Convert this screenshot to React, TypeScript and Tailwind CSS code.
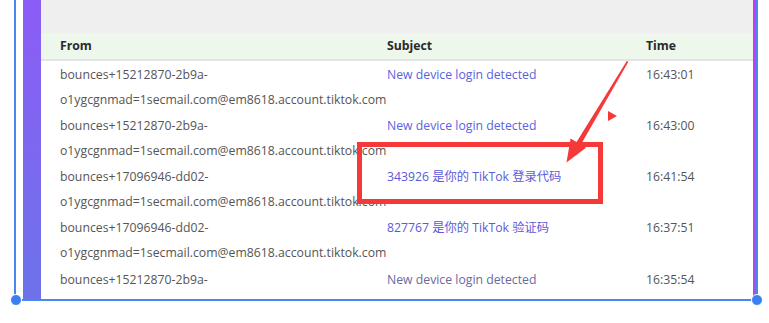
import React from "react";

const rows = [
  { a: "bounces+15212870-2b9a-", b: "o1ygcgnmad=1secmail.com@em8618.account.tiktok.com", s: "New device login detected", t: "16:43:01", c: "text-[#5b62e0]" },
  { a: "bounces+15212870-2b9a-", b: "o1ygcgnmad=1secmail.com@em8618.account.tiktok.com", s: "New device login detected", t: "16:43:00", c: "text-[#5b62e0]" },
  { a: "bounces+17096946-dd02-", b: "o1ygcgnmad=1secmail.com@em8618.account.tiktok.com", s: "343926 是你的 TikTok 登录代码", t: "16:41:54", c: "text-[#5b5ad8]" },
  { a: "bounces+17096946-dd02-", b: "o1ygcgnmad=1secmail.com@em8618.account.tiktok.com", s: "827767 是你的 TikTok 验证码", t: "16:37:51", c: "text-[#5b5ad8]" },
  { a: "bounces+15212870-2b9a-", b: "o1ygcgnmad=1secmail.com@em8618.account.tiktok.com", s: "New device login detected", t: "16:35:54", c: "text-[#6a6a9e]" },
];

export default function App() {
  return (
    <div
      className="relative w-[769px] h-[323px] bg-white overflow-hidden"
      style={{ fontFamily: '"Open Sans", "Noto Sans CJK SC", sans-serif' }}
    >
      <div className="pl-[14px]">
        <div className="flex w-[744px] h-[301px] border-l-2 border-r-2 border-b-2 border-[#4a86ec]">
          <div className="w-[7px] shrink-0" />
          <div className="w-[18px] shrink-0 bg-gradient-to-b from-[#8b5cf6] to-[#6c72ea]" />
          <div className="w-[712px] shrink-0 flex flex-col overflow-hidden">
            <div className="h-[33px] shrink-0 bg-[#efefef]" />
            <div className="h-[28px] shrink-0 bg-[#edf7ec] border-b-2 border-[#e3e3e3] grid grid-cols-[327px_259px_1fr] pl-[19px] items-center text-[12.25px] font-bold text-[#2a2a2a]">
              <div>From</div>
              <div>Subject</div>
              <div>Time</div>
            </div>
            {rows.map((r, i) => (
              <div
                key={i}
                className="h-[51.25px] shrink-0 pt-[0.5px] grid grid-cols-[327px_259px_1fr] pl-[19px] text-[12.25px] leading-[25px] text-[#555]"
              >
                <div className="whitespace-nowrap">
                  <div>{r.a}</div>
                  <div>{r.b}</div>
                </div>
                <div className={`whitespace-nowrap ${r.c}`}>{r.s}</div>
                <div>{r.t}</div>
              </div>
            ))}
          </div>
          <div className="w-[3px] shrink-0 bg-gradient-to-b from-[#c43cf5] to-[#a64ff0]" />
        </div>
      </div>

      {/* red highlight box */}
      <div className="absolute left-[357px] top-[142px] w-[246px] h-[62px] border-[5px] border-[#f53838]" />

      {/* arrow */}
      <svg className="absolute left-0 top-0 pointer-events-none" width="769" height="323" viewBox="0 0 769 323">
        <polygon points="626.8,61 628.4,61.8 580.2,145.8 575.8,143.2" fill="#f53838" />
        <polygon points="566.5,162.5 570.6,138.6 586,147.8" fill="#f53838" />
        <polygon points="608,111 617,116 608,121" fill="#f53838" />
      </svg>

      {/* selection handles */}
      <div className="absolute left-[9.5px] top-[294px] w-[12px] h-[12px] rounded-full bg-[#3b7ff0] border-[1.5px] border-white" />
      <div className="absolute left-[751px] top-[294px] w-[12px] h-[12px] rounded-full bg-[#3b7ff0] border-[1.5px] border-white" />
    </div>
  );
}
